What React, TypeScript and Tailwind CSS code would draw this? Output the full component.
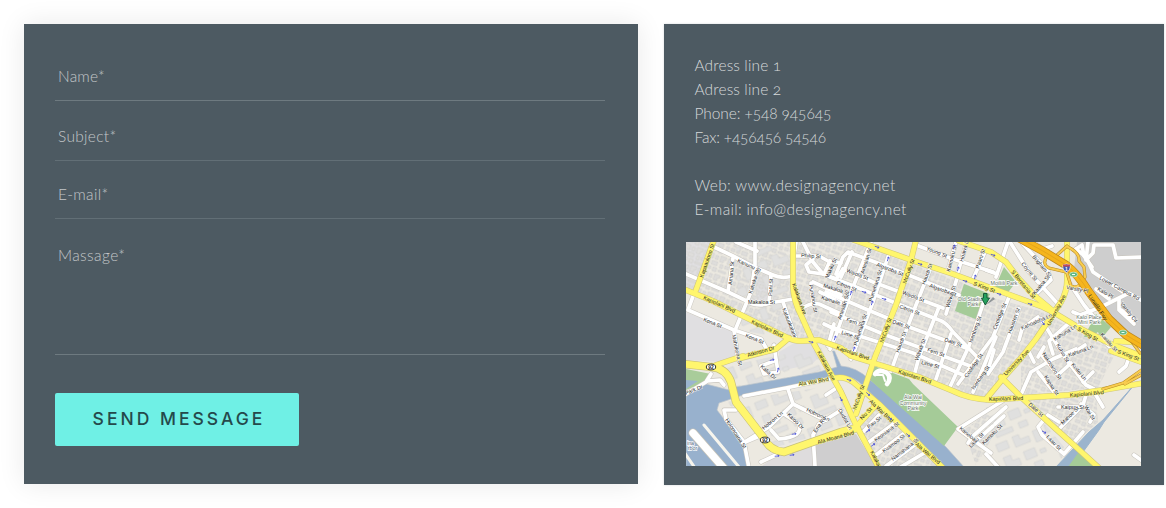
import React from "react";

const fields = [
  { label: "Name*", box: "h-[77px] pt-[41px]", line: "bg-[#6e7a80] h-px", track: "tracking-[0.2px]" },
  { label: "Subject*", box: "h-[60px] pt-[24px]", line: "bg-[#626f76] h-[1.5px]", track: "tracking-[0.3px]" },
  { label: "E-mail*", box: "h-[58px] pt-[22px]", line: "bg-[#626f76] h-[1.5px]", track: "tracking-[0.3px]" },
  { label: "Massage*", box: "h-[136px] pt-[25px]", line: "bg-[#6e7a80] h-px", track: "tracking-[0.4px]" },
];

const contact = [
  { text: "Adress line 1", track: "tracking-[0.12px]" },
  { text: "Adress line 2", track: "tracking-[0.12px]" },
  { text: "Phone: +548 945645", track: "tracking-[-0.1px]" },
  { text: "Fax: +456456 54546", track: "tracking-[-0.2px]" },
  { text: "", track: "" },
  { text: "Web: www.designagency.net", track: "tracking-[0.32px]" },
  { text: "E-mail: info@designagency.net", track: "tracking-[0.32px]" },
];

const streets = [
  "M28 5L47 14L68 25L87 33Q95 37 107 34", "M50 0L71 9", "M69 -2V23L65 50L50 86", "M47 16L42 50",
  "M0 32L42 50L67 62Q76 64 84 61L107 57", "M85 33L83 61", "M97 60L110 97", "M10 46L2 68L48 88L75 97L80 106",
  "M48 88L52 118", "M88 103L90 117L92 130L78 132L75 124L88 119", "M108 14L133 14L142 19L155 21",
  "M115 67Q125 60 133 62L155 72", "M127 40L155 53", "M125 41L127 63", "M134 50L155 61", "M117 0L127 20L137 32L150 37L157 27",
  "M127 17L120 23L123 30L137 32", "M144 19L138 32", "M138 82L155 90", "M148 82L142 104",
  "M150 32L157 15L162 10L197 23L273 53", "M166 10L155 35", "M185 0L165 50L150 93L144 107", "M203 12L187 60L167 112",
  "M245 25L230 63L210 115L205 129", "M270 0L263 25", "M280 3L272 30", "M299 10L287 37", "M230 3L267 17L307 30",
  "M157 27L187 40L257 66", "M144 35L165 43L207 60L253 78Q260 80 267 90L293 117", "M140 50L182 68L223 85L283 107",
  "M145 70L197 92L287 125", "M145 85L227 111L277 133", "M272 33L260 72", "M253 65L233 115L228 134", "M297 62L283 104L263 147",
  "M265 92L250 137", "M310 95L287 150", "M323 55L307 95L272 142", "M333 67L317 110L302 132", "M322 0L310 35",
  "M300 28L311 32", "M324 0L343 30L372 62", "M337 2L362 29L365 38L350 52", "M347 0L357 7L366 4", "M352 75L336 87L333 98",
  "M355 77L380 117L390 130L400 143L408 147", "M383 81L363 99L367 112", "M358 105L352 115", "M382 39L398 63L410 78",
  "M387 70L394 73L415 65L435 55L443 51L458 60", "M390 7L400 15L407 30L437 50", "M390 7L396 3L398 14L406 25",
  "M402 0L400 18L407 11L408 3L427 3L430 16L458 15", "M433 57V68L448 82L446 76L435 68", "M410 47L423 57", "M393 107L399 103",
  "M413 95L427 108", "M430 80L439 91", "M308 108L302 128", "M343 110L348 120", "M334 155L345 130L367 117L390 107",
  "M352 130L368 150", "M355 112L372 133L385 121", "M397 140L407 130", "M401 150L397 163L373 187", "M372 165H392",
  "M395 162L408 173L404 180", "M408 150L417 165", "M373 180L362 173L352 185L356 193L378 212L397 190", "M433 130L440 124L445 110",
  "M448 213L458 220", "M300 212L313 226", "M318 158L272 187L305 211", "M320 165L287 194L282 201", "M307 184L290 199", "M309 182L318 174",
  "M25 132L20 140L0 152", "M21 139L34 138L38 143", "M58 154L100 146L143 137L148 136", "M102 147L107 162L83 185L57 201",
  "M107 162L133 175L140 178", "M155 168L133 182L127 193L129 224", "M98 172L113 182Q118 195 93 197L85 188",
  "M50 168L38 168L40 177L58 200L63 226", "M57 201L76 193", "M75 220L92 212", "M140 153L149 147",
  "M177 190L193 173", "M183 200L210 180", "M190 213L217 192", "M200 224L230 202", "M213 226L240 210", "M170 103L165 117", "M110 0L108 14",
];

const yellow = [
  "M28 -2L10 48", "M55 116L90 107L103 96", "M0 48L27 59L53 72L100 95Q108 99 115 99L133 98L155 106L165 114L207 127L233 135L267 149Q283 157 305 158L333 156L383 153L417 148L458 141",
  "M107 -2V45Q108 60 115 73L127 100L155 150L170 183L193 226", "M230 -2L225 18L210 63L189 115L183 133L170 172",
  "M168 -2L225 18L267 32L357 65L367 70L397 88L427 103L458 115", "M273 -1L305 10L320 20L333 37L350 55L367 69",
  "M381 -2V33Q382 48 375 60L350 97L335 116L320 133L300 157", "M315 135L335 155L370 187L390 205L413 226",
  "M30 123L57 114", "M149 136Q158 134 167 140L193 162L223 192L257 226", "M190 163L170 185", "M425 109L458 121", "M430 99L458 101",
];

const moana = "M-2 122L25 125Q40 126 45 140L50 160L77 195Q84 209 98 210L155 190L171 186";
const ramps = "M362 13Q355 22 363 26L380 30M382 5Q394 11 393 19L398 25L399 35Q393 48 385 44L381 31M417 147L437 141L457 127M439 142L457 132M370 14L381 4M441 93L454 111";
const freeway = "M333 -4L357 9L380 23Q391 31 403 50L423 77L440 93L460 105";

const labels: [string, number, number, number][] = [
  ["Kapiolani Blvd", 17, 57, 24], ["Kapiolani Blvd", 65, 81, 25], ["Kapiolani Blvd", 150, 107, 19], ["Kapiolani Blvd", 212, 131, 18], ["Kapiolani Blvd", 303, 159, -2], ["Kapiolani Blvd", 384, 155, -5],
  ["Kapaaulono St", 17, 36, -71], ["Kalakaua Ave", 106, 42, 70], ["Kalakaua Ave", 131, 110, 62], ["Kalaka", 184, 210, 63],
  ["McCully St", 220, 42, -70], ["McCully St", 197, 101, -70], ["McCully St", 170, 168, -70], ["S King St", 287, 43, 20],
  ["S King St", 391, 88, 30], ["S King St", 431, 111, 20], ["S Beretania St", 325, 30, 51], ["University Ave", 364, 84, -62], ["University Ave", 320, 134, -46],
  ["Date St", 342, 163, 42], ["Ala Moana Blvd", 132, 202, -15], ["Ala Wai Blvd", 113, 144, -10], ["Ala Wai Blvd", 183, 160, 43], ["Ala Wai Blvd", 229, 203, 40],
  ["Atkinson Dr", 62, 115, -16], ["Lunalilo Fwy", 402, 54, 56], ["Kona St", 17, 79, 22], ["Kona St", 59, 95, 22], ["Makaloa St", 62, 62, 0],
  ["Kanunu St", 51, 20, 25], ["Kaheka St", 66, 52, -73], ["Amana St", 46, 43, -85], ["Poni St", 86, 54, -87], ["Philip St", 115, 15, 4],
  ["Punahou St", 123, 43, 80], ["Makaloa St", 137, 45, 17], ["Kamaile St", 135, 57, 18], ["Kalauokalani", 96, 67, 68], ["Mahukona St", 46, 93, 78],
  ["Makiki St", 142, 37, -65],
  ["Young St", 240, 8, 21], ["Algaroba St", 190, 24, 21], ["Algaroba St", 243, 45, 20], ["Waiola St", 160, 30, 21], ["Waiola St", 216, 52, 21],
  ["Citron St", 150, 42, 21], ["Citron St", 213, 66, 20], ["Fern St", 160, 79, 20], ["Fern St", 241, 109, 20], ["Date St", 206, 81, 20], ["Date St", 258, 99, 20],
  ["Lime St", 155, 92, 18], ["Lime St", 235, 122, 15], ["Artesian St", 178, 32, -73], ["Artesian St", 155, 78, -72], ["Pumehana St", 186, 60, -72],
  ["Pumehana St", 171, 104, -72], ["Hauoli St", 239, 43, -70], ["Hauoli St", 213, 111, -70], ["Wiliwili St", 263, 66, -72], ["Wiliwili St", 232, 119, -70],
  ["Isenberg St", 286, 101, -70], ["Kaimoku St", 264, 30, -76], ["Hoawa Ln", 277, 20, -75], ["Paani St", 293, 27, -72], ["Coolidge St", 310, 88, -68],
  ["Hausten St", 325, 92, -70], ["Coolidge St", 281, 136, -55], ["Isenberg St", 288, 148, -55], ["Coyne St", 335, 22, 51], ["Brigham St", 346, 15, 50],
  ["Kaaloa St", 349, 53, -50], ["Varsity Pl", 380, 47, 10], ["Kahoaloha Ln", 336, 88, -24], ["Kahuna Ln", 369, 99, -32], ["Kuhio St", 370, 103, 60],
  ["Lower Campus Rd", 413, 37, 29], ["Varsity Cir", 434, 62, 51], ["Kalo Pl", 411, 48, 30], ["Kaialiu St", 414, 93, 48], ["Kahuna Ln", 383, 115, -20],
  ["Kaipuu St", 375, 167, 0], ["Mahoe St", 377, 183, -45], ["Laau St", 360, 195, 47], ["Kamoku St", 298, 203, -45], ["Kuilei Ln", 385, 123, 50],
  ["Kapaa St", 358, 135, 57], ["Laau St", 285, 206, -45], ["Nakookoo St", 356, 112, 57], ["Wai St", 398, 165, 58], ["Kaneloa", 273, 187, 40], ["Hobron Ln", 78, 188, -40], ["Hobron Ln", 120, 169, 25], ["Kaioo Dr", 101, 173, 45],
  ["Holomoana St", 39, 178, 57], ["Kalia Dr", 74, 125, 42], ["Ena Rd", 130, 191, -55], ["Park Dr", 0, 153, -22], ["Pau St", 183, 187, -39],
  ["Keoniana St", 190, 200, -37], ["Kuamoo St", 198, 211, -37], ["Namahana St", 207, 219, -38], ["Niu St", 176, 178, -45], ["Dudoit Ln", 152, 168, 60],
];

const arrows: [number, number, number][] = [
  [191, 5, 20], [202, 17, -72], [178, 50, 18], [198, 57, 18], [165, 51, -72], [186, 61, -72], [234, 22, 20], [279, 39, 18], [268, 5, -75],
  [272, 27, -75], [289, 35, -75], [313, 52, 18], [344, 62, 20], [307, 13, 20], [125, 100, 12], [149, 96, -70], [163, 138, 18], [182, 152, 42],
  [204, 176, 42], [222, 193, 42], [182, 189, -35], [187, 203, -35], [92, 128, -75], [86, 118, -12], [108, 192, -8], [91, 214, -8], [106, 213, -8], [155, 157, 62],
  [357, 81, 55], [358, 190, 30], [168, 107, -72],
];

function Shield({ x, y, n }: { x: number; y: number; n: string }) {
  return (
    <g>
      <ellipse cx={x} cy={y} rx="4.7" ry="2.9" fill="#fff" stroke="#222" strokeWidth=".9" />
      <text x={x} y={y + 1.7} textAnchor="middle" fontSize="4.8" fontWeight="700" fill="#222">{n}</text>
    </g>
  );
}

function StreetMap() {
  return (
    <svg viewBox="0 0 455 224" className="block h-[224px] w-[455px] overflow-hidden" fontFamily="Liberation Sans, Arial, sans-serif">
      <defs>
        <pattern id="blocks" width="25" height="19" patternUnits="userSpaceOnUse" patternTransform="rotate(20)">
          <path d="M1 1h5v5H1zM8 2h3v4H8zM13 1h6v3h-2v3h-4zM21 1h3v6h-3zM1 8h3v4H1zM6 8h6v4H6zM15 9h3v4h-3zM20 9h4v3h-4zM2 14h5v3H2zM9 14h4v4H9zM15 15h8v2h-8z" fill="#dedddb" stroke="#d0cfcc" strokeWidth=".6" />
        </pattern>
        <pattern id="large" width="52" height="43" patternUnits="userSpaceOnUse" patternTransform="rotate(-22)">
          <path d="M3 3h12v8H3zM21 2h7v5h9v6H21zM42 4h7v12h-7zM5 18h8v6h7v7H5zM26 20h12v9H26zM42 24h6v4h-6zM7 35h18v5H7zM32 34h9v6h-9z" fill="#e0e0df" stroke="#d3d2cf" strokeWidth=".6" />
        </pattern>
      </defs>
      <rect width="455" height="224" fill="#ece9e1" />
      <path d="M0 0H28L10 48L0 44ZM0 70L48 90L54 114L38 120L0 118ZM70 32L84 38L82 58L70 60ZM93 110L108 101H127L133 115L126 122L94 129Z" fill="#e0dfe1" />
      <path d="M0 0H172L272 38L304 55L365 72L334 116L300 155L267 149L155 104L103 97L0 48Z" fill="url(#blocks)" />
      <path d="M53 72L103 97L48 87ZM50 5H105V95L53 70ZM35 125L135 105L145 128L50 147ZM40 160L150 143L168 183L90 205ZM300 165L345 165L378 205L375 224H312Z" fill="url(#large)" />
      <path d="M170 188L190 165L255 224H190ZM335 116L365 75L430 110L412 146L335 153ZM338 155L410 150L412 180L388 202ZM300 85L330 95L295 155L270 148ZM278 188L300 172L315 180L290 224Z" fill="url(#blocks)" />
      <path d="M391 0H455V101L440 91L423 73L403 47L388 27Z" fill="#cecece" />
      <path d="M128 203L170 192L190 224H129Z" fill="#cfcecf" />
      <path d="M92 212L127 203V224H76Z" fill="#dedcdd" />
      <path d="M0 127L25 132L20 140L0 148Z" fill="#a9cc9a" />
      <path d="M0 138L12 139L0 147Z" fill="#9bb5ce" />
      <path d="M0 153L20 142L43 148L50 145L100 136L133 130L151 125L146.500 109L148.500 109L155 124Q170 125 183 137L220 167L260 205L278 225H258L217 182L197 163L173 140Q160 131 150 135L133 140L57 153L33 161L31 168L57 202L63 225H0Z" fill="#98b1cd" stroke="#bbc4cb" strokeWidth=".7" />
      <path d="M188 124L223 137L227 142L272 185L258 204L183 137Z" fill="#a5cb98" />
      <path d="M278 42L304 52L292 78L269 69ZM318 25L330 40L320 53L307 50ZM410 72L425 85L415 97L412 90L404 95H398Z" fill="#a5cb98" />
      <path d="M370 225L387 207L403 190L417 178L448 143L418 180L413 188L397 210L382 225Z" fill="#9bb4cd" stroke="#9bb4cd" strokeWidth="1" />
      <path d="M382 225L392 211L412 225Z" fill="#a5cb98" />
      <g fill="none" strokeLinecap="round" strokeLinejoin="round">
        <path d="M7 191L42 231" stroke="#c6c3b7" strokeWidth="9" />
        <path d="M7 191L42 231" stroke="#fff" strokeWidth="7.5" />
        <path d="M-2 210L9 226M18 183L53 225" stroke="#f7f5ed" strokeWidth="3" />
        {streets.map((d) => <path key={d} d={d} stroke="#c9c6bf" strokeWidth="4.8" />)}
        {streets.map((d) => <path key={d} d={d} stroke="#fff" strokeWidth="3.7" />)}
        <path d="M189 132Q194 126 201 131Q206 136 201 142" stroke="#fff" strokeWidth="4.6" />
        <path d="M190 133L197 133L199 139" stroke="#fff" strokeWidth="2" />
        {yellow.map((d) => <path key={d} d={d} stroke="#cfc67b" strokeWidth="6" />)}
        <path d={moana} stroke="#c8c179" strokeWidth="8.3" />
        {yellow.map((d) => <path key={d} d={d} stroke="#fff66d" strokeWidth="4.9" />)}
        <path d={moana} stroke="#fff66d" strokeWidth="7" />
        <path d={ramps} stroke="#b98b25" strokeWidth="3.1" />
        <path d={ramps} stroke="#f8cc4e" strokeWidth="2.1" />
        <path d={freeway} stroke="#bd861d" strokeWidth="8.6" />
        <path d={freeway} stroke="#f5b51d" strokeWidth="7.2" />
        <path d={freeway} stroke="#d99a1b" strokeWidth=".6" />
      </g>
      <g fontSize="5.4" fill="#242424" strokeOpacity=".72" strokeWidth="1" paintOrder="stroke">
        {labels.map(([t, x, y, a]) => (
          <text key={t + x + "," + y} transform={`translate(${x} ${y}) rotate(${a})`} stroke={/Blvd|King|Kalaka|McCully|Univ|Beret|Kapaau|Atkin|Niu/.test(t) ? "#fff66d" : t === "Lunalilo Fwy" ? "#f5b51d" : "#fff"}>{t}</text>
        ))}
      </g>
      <g fill="none" stroke="#4850d7" strokeWidth=".8">
        {arrows.map(([x, y, a]) => (
          <path key={x + "," + y} d="M-2.3 0H2M.8 -1L2.1 0L.8 1" transform={`translate(${x} ${y}) rotate(${a})`} />
        ))}
      </g>
      <g fontSize="5.3" textAnchor="middle" fill="#64705f" stroke="#fff" strokeWidth="1.3" paintOrder="stroke">
        <text x="286" y="58.5">Old Stadium</text><text x="287" y="63.5">Park</text>
        <text x="318" y="43">Moiliili Park</text>
        <text x="403" y="77">Kalo Place</text><text x="403" y="82">Mini Park</text>
        <text x="227" y="157">Ala Wai</text><text x="227" y="162.5">Community</text><text x="227" y="168">Park</text>
        <text x="4.500" y="203" fill="#526581">ina</text><text x="6.500" y="208" fill="#526581">rbor</text>
      </g>
      <Shield x={25} y={125} n="92" />
      <Shield x={79} y={198} n="92" />
      <path d="M377 23L380.5 22L384 23Q385 28 380.5 30.5Q376 28 377 23Z" fill="#4258b2" stroke="#fff" strokeWidth=".6" />
      <path d="M377 22.5h7v2h-7z" fill="#c84955" />
      <text x="380.5" y="29" textAnchor="middle" fontSize="5" fontWeight="700" fill="#fff">1</text>
      <ellipse cx="387.5" cy="32.5" rx="4" ry="2.4" fill="#63b885" stroke="#d5efd9" strokeWidth=".7" />
      <ellipse cx="437" cy="90.5" rx="4" ry="2.4" fill="#63b885" stroke="#d5efd9" strokeWidth=".7" />
      <path d="M386 32.5h3M435.500 90.5h3" stroke="#eff" strokeWidth="1.2" />
      <path d="M300 63L307 55L309 57Z" fill="#59636a" opacity=".6" />
      <path d="M297.500 51.500H301V56H303.500L299.300 63L295.500 56H297.500Z" fill="#24a15d" stroke="#175d3a" strokeWidth="1" strokeLinejoin="round" />
    </svg>
  );
}

export default function App() {
  return (
    <main className="flex h-[508px] w-[1166px] items-start gap-[26px] overflow-hidden bg-white pt-6 pl-6 font-['Lato','Open_Sans',sans-serif] font-light">
      <form className="flex h-[460px] w-[614px] shrink-0 flex-col bg-[#4d5a62] px-[31px] shadow-[0_0_26px_rgba(0,0,0,0.09)]">
        {fields.map((f) => (
          <div key={f.label} className={`flex flex-col justify-between ${f.box}`}>
            <label className={`pl-[3px] text-[15.5px] leading-[22px] text-[#c3c7c9] ${f.track}`}>{f.label}</label>
            <div className={`w-[550px] shrink-0 ${f.line}`} />
          </div>
        ))}
        <button type="button" className="mt-[38px] flex h-[53px] w-[244px] items-center justify-center rounded-[2px] bg-[#6ff0e5] pl-1 font-['Inter',sans-serif] text-[17.5px] font-medium tracking-[3px] text-[#25494b]">
          SEND MESSAGE
        </button>
      </form>
      <section className="flex h-[461px] w-[500px] shrink-0 flex-col bg-[#4d5a62] pt-[29px] pl-[22px] shadow-[0_0_2px_rgba(77,90,98,0.25)]">
        <address className="mb-[21px] flex flex-col pl-[8.5px] text-[15.5px] leading-6 text-[#d6d9da] not-italic">
          {contact.map((c, i) => <span key={i} className={`h-6 whitespace-nowrap oldstyle-nums ${c.track}`}>{c.text}</span>)}
        </address>
        <StreetMap />
      </section>
    </main>
  );
}
